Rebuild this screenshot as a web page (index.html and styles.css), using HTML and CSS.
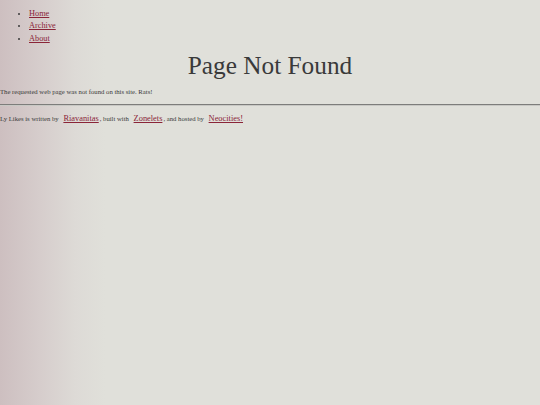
FILE: index.html
```html
<!DOCTYPE html>
<html>
<head>
<meta charset="utf-8">
<title>Page Not Found</title>
<link rel="stylesheet" href="styles.css">
</head>
<body>
<ul class="nav">
  <li><a href="#">Home</a></li>
  <li><a href="#">Archive</a></li>
  <li><a href="#">About</a></li>
</ul>
<h1 class="title">Page Not Found</h1>
<p class="message">The requested web page was not found on this site. Rats!</p>
<hr class="rule">
<p class="footer">Ly Likes is written by <a class="credit" href="#">Riavanitas</a>, built with <a class="credit" href="#">Zonelets</a>, and hosted by <a class="credit" href="#">Neocities!</a></p>
</body>
</html>
```
FILE: styles.css
```css
html, body {
  margin: 0;
  padding: 0;
  min-height: 100%;
}
body {
  font-family: "Liberation Serif", "Times New Roman", serif;
  color: #3a3a3a;
  font-size: 6.7px;
  background: linear-gradient(to right, #cdbfc0 0px, #d6cdcc 40px, #dddad6 75px, #e0e0da 105px, #e0e0da 100%);
  min-height: 405px;
}
a {
  color: #8a2438;
}
.nav {
  margin: 7.5px 0 0 0;
  padding-left: 29px;
  font-size: 8.3px;
  line-height: 12.5px;
}
.title {
  margin: 5px 0 0 0;
  text-align: center;
  font-weight: normal;
  font-size: 25.3px;
  line-height: 1.2;
}
.message {
  margin: 7.5px 0 0 0;
  line-height: 8px;
}
.rule {
  margin: 8px 0 0 0;
  border: 0;
  border-top: 1px solid #7d7d7b;
  border-bottom: 1px solid #c8c8c4;
  height: 0;
}
.footer {
  margin: 8px 0 0 0;
  line-height: 10px;
}
.credit {
  font-size: 8.4px;
  padding: 0 1px 0 3px;
}
```
